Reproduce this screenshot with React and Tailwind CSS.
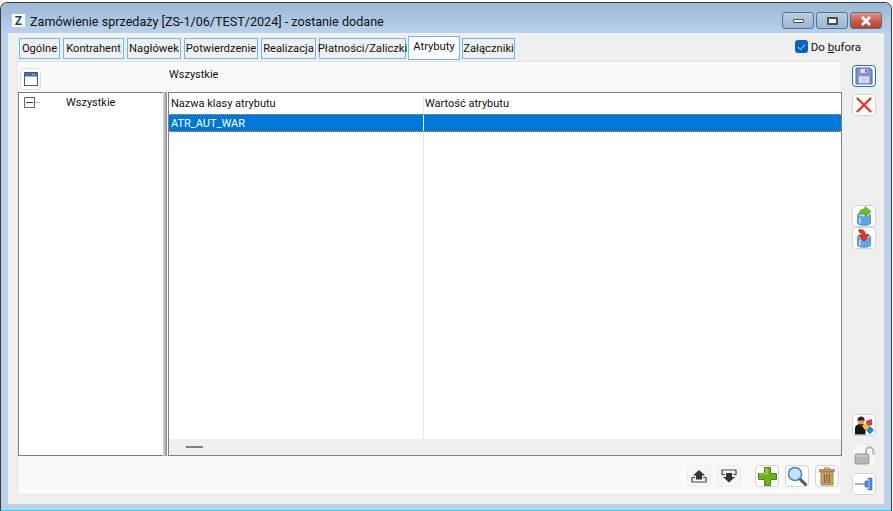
const TABS = [
  { label: "Ogólne", w: "w-[41px]" },
  { label: "Kontrahent", w: "w-[61px]" },
  { label: "Nagłówek", w: "w-[54px]" },
  { label: "Potwierdzenie", w: "w-[74px]" },
  { label: "Realizacja", w: "w-[55px]" },
  { label: "Płatności/Zaliczki", w: "w-[87px]" },
  { label: "Atrybuty", w: "w-[52px]", active: true },
  { label: "Załączniki", w: "w-[53px]" },
];

function IconButton({ children, focused, faded }) {
  return (
    <button
      className={`flex h-[22px] w-[24px] items-center justify-center rounded-[4px] border ${
        focused ? "border-[#0a78d7] bg-white" : faded ? "border-[#ececec] bg-[#f6f6f6]" : "border-[#d4d4d4] bg-white"
      }`}
    >
      {children}
    </button>
  );
}

function SaveIcon() {
  return (
    <svg width="18" height="18" viewBox="0 0 18 18">
      <path d="M1 1h14l2 2v14H1z" fill="#8a8fd6" stroke="#5d62ac" />
      <rect x="5" y="1.500" width="8" height="5" fill="#dfe1f5" stroke="#6a6fb8" strokeWidth="0.600" />
      <rect x="10" y="2.500" width="2" height="3" fill="#6a6fb8" />
      <rect x="3.500" y="9" width="11" height="7.500" fill="#eef0fa" stroke="#7a7fc4" strokeWidth="0.600" />
      <path d="M5 11h8M5 13h8M5 15h8" stroke="#a0a3d4" strokeWidth="0.800" />
    </svg>
  );
}

function CloseIcon() {
  return (
    <svg width="18" height="18" viewBox="0 0 18 18">
      <path d="M2.500 2.500L15.500 15.500M15.500 2.500L2.500 15.500" stroke="#ee3322" strokeWidth="2.400" strokeLinecap="round" />
    </svg>
  );
}

function Can({ children }) {
  return (
    <svg width="18" height="20" viewBox="0 0 18 20">
      <path d="M2.500 9v8c0 1.500 3 2.300 6.500 2.300s6.500-.8 6.500-2.300V9z" fill="#5ea6e6" stroke="#3f7db8" strokeWidth="0.700" />
      <ellipse cx="9" cy="9" rx="6.500" ry="2.200" fill="#a8d4f5" stroke="#3f7db8" strokeWidth="0.700" />
      <path d="M5 11.500v6" stroke="#bfe0f8" strokeWidth="1.500" />
      {children}
    </svg>
  );
}

function TreeWindowIcon() {
  return (
    <svg width="14" height="14" viewBox="0 0 14 14">
      <rect x="0.500" y="0.500" width="13" height="13" fill="#fff" stroke="#3f5f88" />
      <rect x="1" y="1" width="12" height="3.500" fill="#3f6ea8" />
      <path d="M8 2.500h1M10 2.500h1" stroke="#cfe0f2" />
    </svg>
  );
}

function OwnerIcon() {
  return (
    <svg width="21" height="20" viewBox="0 0 21 20">
      <circle cx="7" cy="6" r="3.500" fill="#d99a6c" />
      <path d="M3.500 5.500c-.5-5 7.500-5.500 7 0z" fill="#3a1c10" />
      <path d="M1 19.500v-6c0-3 2.500-4.500 6-4.500s4.500 1.500 4.500 4.500v6z" fill="#161616" />
      <path d="M6 9l1 3 1-3z" fill="#d22" />
      <path d="M12 6l6-2v6l-6 2z" fill="#e33b3b" />
      <path d="M8 11l4-3 3 4-4 3z" fill="#f5c71a" />
      <path d="M12 15l4-4 4 4-4 4.500z" fill="#2f7fd8" />
    </svg>
  );
}

function LockIcon() {
  return (
    <svg width="21" height="20" viewBox="0 0 21 20">
      <path d="M12 9V6a3.700 3.700 0 0 1 7.400 0v4" fill="none" stroke="#b4b4b4" strokeWidth="2" />
      <rect x="1" y="9" width="14" height="10" rx="1.500" fill="#b5b5b5" stroke="#989898" />
      <path d="M2.500 11h11" stroke="#dedede" />
    </svg>
  );
}

function PinIcon() {
  return (
    <svg width="20" height="16" viewBox="0 0 20 16">
      <path d="M1 8h10" stroke="#9a9a9a" strokeWidth="1.500" />
      <path d="M11 5h3V2h4v12h-4v-3h-3z" fill="#4b8fd6" stroke="#2f6fb4" strokeWidth="0.600" />
      <path d="M15 3v10" stroke="#9cc7ef" />
    </svg>
  );
}

function ExportIcon({ down }) {
  return down ? (
    <svg width="16" height="14" viewBox="0 0 16 14">
      <path d="M1 5.500v-4.500h14v4.500h-3" fill="none" stroke="#444" strokeWidth="1.200" />
      <path d="M1 5.500h3" stroke="#444" strokeWidth="1.200" />
      <path d="M5 4h6v4h3l-6 5.500L2 8h3z" fill="#333" />
    </svg>
  ) : (
    <svg width="16" height="14" viewBox="0 0 16 14">
      <path d="M4 8.500H1v4.500h14V8.500h-3" fill="none" stroke="#444" strokeWidth="1.200" />
      <path d="M5 10.500h6v-4h3L8 1 2 6.500h3z" fill="#333" />
    </svg>
  );
}

function PlusIcon() {
  return (
    <svg width="19" height="19" viewBox="0 0 19 19">
      <path d="M6.500 .5h6v6h6v6h-6v6h-6v-6h-6v-6h6z" fill="#6fb01e" stroke="#4c8412" />
      <path d="M7.500 1.500h2v6h-8v-1h6z" fill="#a5d65a" />
    </svg>
  );
}

function SearchIcon() {
  return (
    <svg width="20" height="20" viewBox="0 0 20 20">
      <path d="M12 12l6.500 6.500" stroke="#4b5560" strokeWidth="3" strokeLinecap="round" />
      <circle cx="8" cy="8" r="6.500" fill="#c6e2fa" stroke="#4a84b8" strokeWidth="1.500" />
    </svg>
  );
}

function TrashIcon() {
  return (
    <svg width="16" height="19" viewBox="0 0 16 19">
      <rect x="0.500" y="2.500" width="15" height="2.500" fill="#c19a63" stroke="#96713f" strokeWidth="0.600" />
      <path d="M5.500 2.500v-1.500h5v1.500" fill="none" stroke="#96713f" />
      <path d="M2 5h12v13H2z" fill="#c9a26a" stroke="#96713f" strokeWidth="0.800" />
      <path d="M5.500 7v9M8 7v9M10.500 7v9" stroke="#8a6533" strokeWidth="1.200" />
    </svg>
  );
}

function WindowButton({ children, close }) {
  return (
    <div
      className={`flex h-[17px] w-[32px] items-center justify-center rounded-[3px] border border-[#5c6f86] ${
        close ? "bg-gradient-to-b from-[#e3978b] via-[#c9604c] to-[#b5432f]" : "bg-gradient-to-b from-[#b9cde2] to-[#9db6d2]"
      }`}
    >
      {children}
    </div>
  );
}

export default function App() {
  return (
    <div className="h-[511px] w-[893px] overflow-hidden bg-white pt-[2px] font-['Roboto',sans-serif] text-[11px] leading-[16px] text-[#111]">
      <div className="flex h-[509px] w-[892px] flex-col overflow-hidden rounded-t-[7px] border-x border-t border-b border-x-[#3c3c3c] border-t-[#3c3c3c] border-b-[#2ccde8] bg-[#b9d2ea]">
        {/* Title bar */}
        <div className="flex h-[30px] shrink-0 items-center bg-gradient-to-b from-[#9cb7d4] to-[#b9d2ec] pt-[5px] pr-[9px] pl-[11px]">
          <div className="flex h-[13px] w-[13px] items-center justify-center bg-white text-[12px] leading-none font-bold text-[#1f3f5f]">Z</div>
          <span className="mt-[2px] ml-[5px] text-[12.6px] whitespace-nowrap">Zamówienie sprzedaży [ZS-1/06/TEST/2024] - zostanie dodane</span>
          <div className="ml-auto flex gap-[2px]">
            <WindowButton>
              <div className="h-[4px] w-[11px] rounded-[1px] border border-[#3f4f60] bg-white" />
            </WindowButton>
            <WindowButton>
              <div className="h-[8px] w-[11px] rounded-[1px] border-2 border-[#3f4f60] bg-white" />
            </WindowButton>
            <WindowButton close>
              <svg width="12" height="10" viewBox="0 0 12 10">
                <path d="M2 1l8 8M10 1l-8 8" stroke="#fff" strokeWidth="2.800" />
              </svg>
            </WindowButton>
          </div>
        </div>

        {/* Client area */}
        <div className="mr-[7px] ml-[7px] flex min-h-0 flex-1 flex-col bg-[#efefef]">
          {/* Tabs */}
          <div className="flex h-[28px] shrink-0 items-end pr-[23px] pl-[11px]">
            <div className="flex items-end gap-[3px] text-[11.2px]">
              {TABS.map((tab) => (
                <div
                  key={tab.label}
                  className={`flex items-center justify-center border border-[#6cb8f5] whitespace-nowrap ${tab.w} ${
                    tab.active ? "-mx-[1px] mb-[1px] h-[24px] bg-white pb-[3px]" : "mb-[2px] h-[21px] bg-[#f0f0f0] pt-[1px]"
                  }`}
                >
                  {tab.label}
                </div>
              ))}
            </div>
            <div className="mb-[6px] ml-auto flex items-center gap-[3px] text-[11.5px]">
              <div className="flex h-[13px] w-[13px] items-center justify-center rounded-[3px] bg-[#0c62bd]">
                <svg width="9" height="8" viewBox="0 0 9 8">
                  <path d="M1 4l2.500 2.500L8 1.500" fill="none" stroke="#cfe3f7" strokeWidth="1" />
                </svg>
              </div>
              <span className="mt-[1px]">
                Do <span className="underline">b</span>ufora
              </span>
            </div>
          </div>

          <div className="flex min-h-0 flex-1 items-stretch pb-[9px] pl-[9px]">
            {/* Main panel */}
            <div className="flex w-[825px] flex-col border border-[#e4e4e4] bg-[#f9f9f9]">
              <div className="flex h-[30px] shrink-0 pl-[2px]">
                <div className="mt-[6px] flex h-[22px] w-[21px] items-center justify-center rounded-[4px] border border-[#dcdcdc] bg-white">
                  <TreeWindowIcon />
                </div>
                <span className="mt-[5px] ml-[128px]">Wszystkie</span>
              </div>

              <div className="-mx-px flex h-[364px] shrink-0 pl-[1px]">
                {/* Tree */}
                <div className="flex w-[145px] shrink-0 items-start border-y border-l border-[#7f7f7f] bg-white pt-[4px] pl-[5px]">
                  <div className="flex h-[11px] w-[11px] items-center justify-center border border-[#666] bg-white">
                    <div className="h-px w-[7px] bg-[#333]" />
                  </div>
                  <div className="mt-[5px] h-px w-[5px] bg-[#b5b5b5]" />
                  <span className="-mt-[2px] ml-[26px]">Wszystkie</span>
                </div>
                {/* Splitter */}
                <div className="mr-[1px] w-[4px] shrink-0 bg-gradient-to-r from-[#dcdcdc] to-[#8c8c8c]" />
                {/* Grid */}
                <div className="flex min-w-0 flex-1 flex-col border border-[#7f7f7f] bg-white">
                  <div className="flex h-[21px] shrink-0 items-center">
                    <div className="w-[254px] shrink-0 pl-[2px]">Nazwa klasy atrybutu</div>
                    <div className="border-l border-[#e8e8e8] pl-[1px]">Wartość atrybutu</div>
                  </div>
                  <div className="flex h-[18px] shrink-0 items-center border-y border-dotted border-[#f08a3c] bg-[#0078d7] text-white">
                    <div className="w-[254px] shrink-0 pt-[1px] pl-[2px]">ATR_AUT_WAR</div>
                    <div className="h-full w-px bg-white" />
                  </div>
                  <div className="flex min-h-0 flex-1">
                    <div className="w-[254px] shrink-0" />
                    <div className="w-px bg-[#e8e8e8]" />
                  </div>
                  <div className="flex h-[16px] shrink-0 items-center bg-[#efefef] pl-[17px]">
                    <div className="h-[2px] w-[17px] bg-[#808080]" />
                  </div>
                </div>
              </div>

              {/* Bottom toolbar */}
              <div className="flex flex-1 items-start justify-end gap-[6px] pt-[9px] pr-[2px]">
                <IconButton faded>
                  <ExportIcon />
                </IconButton>
                <IconButton faded>
                  <ExportIcon down />
                </IconButton>
                <div className="w-[2px]" />
                <IconButton>
                  <PlusIcon />
                </IconButton>
                <IconButton>
                  <SearchIcon />
                </IconButton>
                <IconButton>
                  <TrashIcon />
                </IconButton>
              </div>
            </div>

            {/* Right toolbar */}
            <div className="ml-[10px] flex w-[24px] flex-col pt-[4px]">
              <IconButton focused>
                <SaveIcon />
              </IconButton>
              <div className="mt-[7px]">
                <IconButton>
                  <CloseIcon />
                </IconButton>
              </div>
              <div className="mt-[89px]">
                <IconButton>
                  <Can>
                    <path d="M4 9c0-4 2-6 6-6V0.500l6 5-6 5V7.500C7 7.500 5 8 4 9z" fill="#6cc02a" stroke="#3f8a12" strokeWidth="0.600" />
                  </Can>
                </IconButton>
              </div>
              <div className="mt-[0px]">
                <IconButton>
                  <Can>
                    <path d="M4 1.500c4 0 6 1 6.500 5H14l-5 7-5.500-6.500H7c-.3-1.500-1.500-2.500-3-3z" fill="#e8321e" stroke="#a81d0e" strokeWidth="0.600" />
                  </Can>
                </IconButton>
              </div>
              <div className="mt-auto">
                <IconButton>
                  <OwnerIcon />
                </IconButton>
              </div>
              <div className="mt-[8px]">
                <IconButton faded>
                  <LockIcon />
                </IconButton>
              </div>
              <div className="mt-[7px]">
                <IconButton>
                  <PinIcon />
                </IconButton>
              </div>
            </div>
          </div>
        </div>
        <div className="h-[6px] shrink-0" />
      </div>
    </div>
  );
}
